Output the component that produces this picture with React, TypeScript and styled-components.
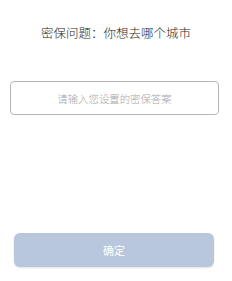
import React from "react";
import styled, { createGlobalStyle } from "styled-components";

const Global = createGlobalStyle`
  html, body { margin: 0; padding: 0; background: #fff; }
  body { font-family: "Noto Sans CJK SC", "Noto Sans", sans-serif; }
  * { box-sizing: border-box; }
`;

const Page = styled.div`
  width: 232px;
  height: 281px;
  display: flex;
  flex-direction: column;
  padding: 0 13px 0 10px;
`;

const Question = styled.div`
  margin-top: 23px;
  height: 20px;
  line-height: 20px;
  text-align: center;
  font-size: 12.5px;
  font-weight: 300;
  color: #1e1e1e;
  padding-left: 3px;
  text-spacing-trim: space-all;
  white-space: nowrap;
`;

const Input = styled.input`
  margin-top: 38px;
  width: 100%;
  height: 34px;
  border: 1px solid #b5b5b5;
  border-radius: 4px;
  text-align: center;
  font-family: "Noto Sans CJK SC", sans-serif;
  font-size: 10.4px;
  font-weight: 300;
  color: #333;
  outline: none;
  background: #fff;
  &::placeholder { color: #a6a6a6; }
`;

const Button = styled.button`
  margin: 118px 0 0 4px;
  width: 200px;
  height: 34px;
  border: none;
  border-radius: 6px;
  background: #b8c7dc;
  color: #fff;
  font-family: "Noto Sans CJK SC", sans-serif;
  font-size: 11px;
  font-weight: 400;
  box-shadow: 0 1px 2px rgba(0,0,0,0.12);
`;

export default function App() {
  return (
    <>
      <Global />
      <Page>
        <Question>密保问题：你想去哪个城市</Question>
        <Input placeholder="请输入您设置的密保答案" />
        <Button>确定</Button>
      </Page>
    </>
  );
}
